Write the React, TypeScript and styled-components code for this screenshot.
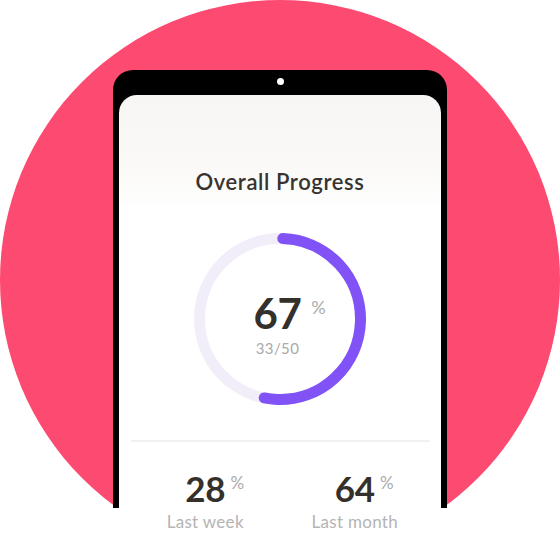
import React from "react";
import styled, { createGlobalStyle } from "styled-components";

const Global = createGlobalStyle`
  html, body { margin: 0; padding: 0; background: #ffffff; }
  body { font-family: "Lato", "Open Sans", sans-serif; }
`;

const Stage = styled.div`
  position: relative;
  width: 560px;
  height: 560px;
  overflow: hidden;
  background: #ffffff;
`;

const Backdrop = styled.div`
  position: relative;
  height: 508px;
  overflow: hidden;
`;

const Disc = styled.div`
  width: 560px;
  height: 560px;
  border-radius: 50%;
  background: #fd4a70;
`;

const Bezel = styled.div`
  position: absolute;
  top: 70px;
  left: 113px;
  width: 334px;
  height: 520px;
  background: #000000;
  border-radius: 20px;
`;

const Camera = styled.div`
  position: absolute;
  top: 8px;
  left: 50%;
  width: 7px;
  height: 7px;
  margin-left: -3.5px;
  border-radius: 50%;
  background: #ffffff;
`;

const Screen = styled.div`
  position: absolute;
  top: 95px;
  left: 119px;
  width: 322px;
  height: 480px;
  border-radius: 18px 18px 0 0;
  background: linear-gradient(180deg, #f8f6f4 0px, #faf9f7 70px, #ffffff 115px);
  display: flex;
  flex-direction: column;
  align-items: center;
`;

const Title = styled.h1`
  margin: 74px 0 0;
  font-family: "Lato", sans-serif;
  font-size: 22px;
  font-weight: 600;
  color: #37332f;
  letter-spacing: 0.6px;
  line-height: 26px;
`;

const RingWrap = styled.div`
  position: relative;
  margin-top: 37px;
  width: 174px;
  height: 174px;
`;

const RingCenter = styled.div`
  position: absolute;
  inset: 0;
  display: flex;
  flex-direction: column;
  align-items: center;
  justify-content: center;
  padding: 10px 5px 0 0;
`;

const ValueRow = styled.div`
  position: relative;
  display: flex;
  align-items: flex-start;
`;

const BigValue = styled.span<{ $size: number }>`
  font-family: "Lato", sans-serif;
  font-weight: 700;
  font-size: ${(p) => p.$size}px;
  line-height: 1;
  color: #34302c;
  letter-spacing: -0.3px;
`;

const Pct = styled.span<{ $size: number; $right: number; $top: number }>`
  position: absolute;
  top: ${(p) => p.$top}px;
  right: ${(p) => p.$right}px;
  font-family: "Lato", sans-serif;
  font-weight: 400;
  font-size: ${(p) => p.$size}px;
  line-height: 1;
  color: #ababab;
`;

const Fraction = styled.div`
  margin-top: 5px;
  font-family: "Lato", sans-serif;
  font-size: 15px;
  line-height: 18px;
  color: #aaaaaa;
  letter-spacing: 0.4px;
`;

const Divider = styled.div`
  margin-top: 34px;
  width: 299px;
  height: 2px;
  background: #f2f1f0;
`;

const Stats = styled.div`
  margin-top: 29px;
  width: 299px;
  display: grid;
  grid-template-columns: 1fr 1fr;
`;

const Stat = styled.div`
  display: flex;
  flex-direction: column;
  align-items: center;
`;

const StatLabel = styled.div`
  margin-top: 6px;
  font-family: "Lato", sans-serif;
  font-size: 17px;
  line-height: 20px;
  color: #b4b4b4;
  letter-spacing: 0.3px;
`;

const Ring: React.FC<{ frac: number }> = ({ frac }) => {
  const r = 80.5;
  const c = 2 * Math.PI * r;
  return (
    <svg width="174" height="174" viewBox="0 0 174 174">
      <circle cx="87" cy="87" r={r} fill="none" stroke="#f1eefa" strokeWidth="11" />
      <circle
        cx="87"
        cy="87"
        r={r}
        fill="none"
        stroke="#8153f7"
        strokeWidth="11"
        strokeLinecap="round"
        strokeDasharray={`${c * frac} ${c}`}
        transform="rotate(-88 87 87)"
      />
    </svg>
  );
};

export default function App() {
  return (
    <Stage>
      <Global />
      <Backdrop>
        <Disc />
        <Bezel>
          <Camera />
        </Bezel>
      </Backdrop>
      <Screen>
        <Title>Overall Progress</Title>
        <RingWrap>
          <Ring frac={0.525} />
          <RingCenter>
            <ValueRow>
              <BigValue $size={42}>67</BigValue>
              <Pct $size={18} $right={-24} $top={6}>%</Pct>
            </ValueRow>
            <Fraction>33/50</Fraction>
          </RingCenter>
        </RingWrap>
        <Divider />
        <Stats>
          <Stat>
            <ValueRow>
              <BigValue $size={35}>28</BigValue>
              <Pct $size={17} $right={-19} $top={3}>%</Pct>
            </ValueRow>
            <StatLabel>Last week</StatLabel>
          </Stat>
          <Stat>
            <ValueRow>
              <BigValue $size={35}>64</BigValue>
              <Pct $size={17} $right={-19} $top={3}>%</Pct>
            </ValueRow>
            <StatLabel>Last month</StatLabel>
          </Stat>
        </Stats>
      </Screen>
    </Stage>
  );
}
